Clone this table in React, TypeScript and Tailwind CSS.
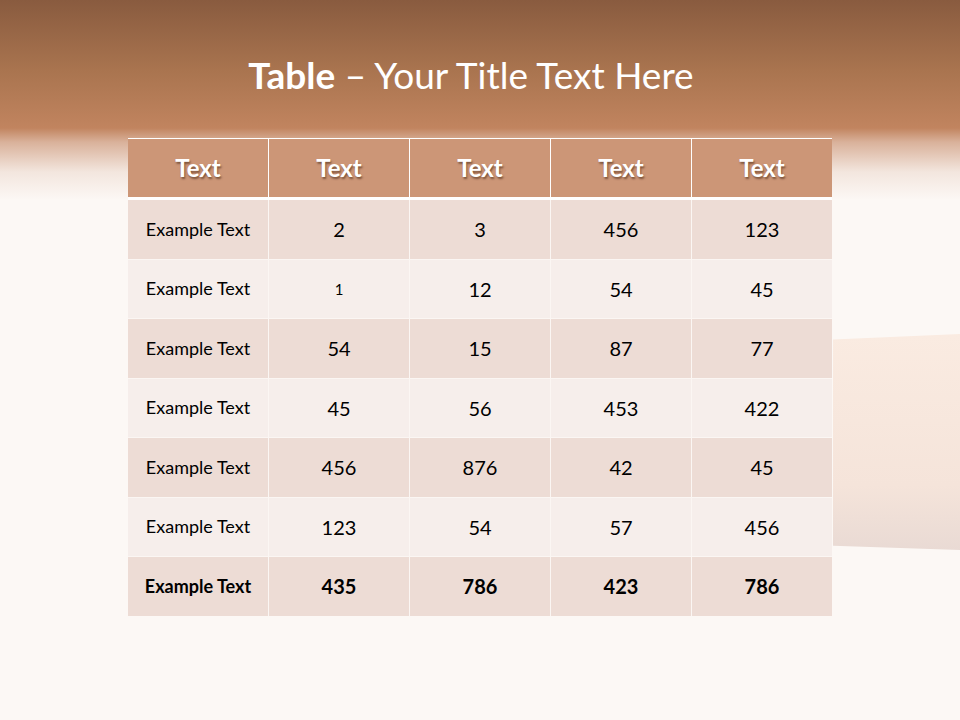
const header = ["Text", "Text", "Text", "Text", "Text"];

const rows: string[][] = [
  ["Example Text", "2", "3", "456", "123"],
  ["Example Text", "1", "12", "54", "45"],
  ["Example Text", "54", "15", "87", "77"],
  ["Example Text", "45", "56", "453", "422"],
  ["Example Text", "456", "876", "42", "45"],
  ["Example Text", "123", "54", "57", "456"],
  ["Example Text", "435", "786", "423", "786"],
];

export default function App() {
  return (
    <div
      className="relative w-[960px] h-[720px] overflow-hidden bg-[linear-gradient(to_bottom,#895b3f_0px,#a9744f_70px,#c1845f_128px,#d9b19a_142px,#f3e6de_172px,#fcf8f5_200px,#fcf8f5_720px)]"
      style={{ fontFamily: "Lato, 'Open Sans', sans-serif" }}
    >
      {/* decorative panel on the right */}
      <div className="absolute left-[833px] top-[334px] w-[127px] h-[216px] bg-[linear-gradient(to_bottom,#faebe1,#f5e4da_70%,#e9dad4)] [clip-path:polygon(0_2.5%,100%_0,100%_100%,0_98%)]" />

      <div className="relative flex flex-col items-center pt-[52px]">
        <h1 className="pr-[18px] text-[37px] leading-[46px] text-white">
          <span className="font-bold">Table</span> – Your Title Text Here
        </h1>

        <div className="mt-[40px] w-[704px] bg-white pt-px">
          <div className="grid grid-cols-5 gap-px">
            {header.map((h, i) => (
              <div
                key={i}
                className="flex h-[58px] items-center justify-center bg-[#cc9677] text-[24px] font-bold text-white [text-shadow:1px_2px_2px_rgba(60,30,10,0.55)]"
              >
                {h}
              </div>
            ))}
          </div>

          <div className="mt-[3px] grid grid-cols-5 gap-px bg-[#fbf6f3]">
            {rows.map((row, r) =>
              row.map((cell, c) => {
                const last = r === rows.length - 1;
                const bg = r % 2 === 0 ? "bg-[#eddcd5]" : "bg-[#f6eeeb]";
                let size = c === 0 ? "text-[18px]" : "text-[20px]";
                if (r === 1 && c === 1) size = "text-[15px]";
                return (
                  <div
                    key={r + "-" + c}
                    className={`flex h-[58.5px] items-center justify-center text-black ${bg} ${size} ${
                      last ? "font-bold" : ""
                    }`}
                  >
                    {cell}
                  </div>
                );
              }),
            )}
          </div>
        </div>
      </div>
    </div>
  );
}
